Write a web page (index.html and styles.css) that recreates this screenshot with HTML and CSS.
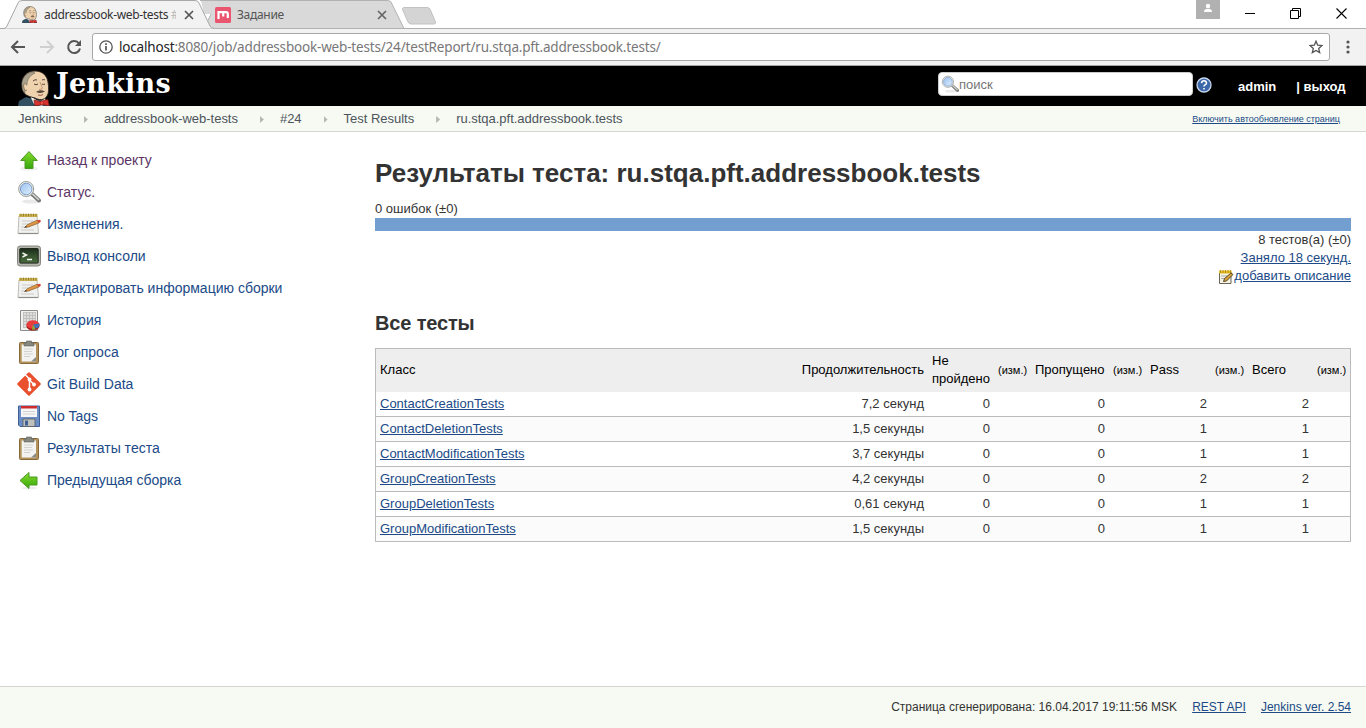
FILE: index.html
```
<!DOCTYPE html>
<html lang="ru">
<head>
<meta charset="utf-8">
<title>addressbook-web-tests #24 ru.stqa.pft.addressbook.tests [Jenkins]</title>
<link rel="stylesheet" href="styles.css">
</head>
<body>
<svg class="defs" width="0" height="0">
  <defs>
    <linearGradient id="green" x1="0" y1="0" x2="0" y2="1"><stop offset="0" stop-color="#86dc2c"/><stop offset="1" stop-color="#35a60c"/></linearGradient>
    <linearGradient id="screen" x1="0" y1="0" x2="0" y2="1"><stop offset="0" stop-color="#1b2b19"/><stop offset=".5" stop-color="#34502d"/><stop offset="1" stop-color="#4a6c3e"/></linearGradient>
    <linearGradient id="lens" x1="0" y1="0" x2="1" y2="1"><stop offset="0" stop-color="#9fc4ef"/><stop offset=".6" stop-color="#c3dcf8"/><stop offset="1" stop-color="#e6f2ff"/></linearGradient>
    <symbol id="butler" viewBox="0 0 34 36">
      <path d="M0 36 1 31 8 27 18 30 29 30 32 36Z" fill="#335061"/>
      <path d="M12 26 22 32 27 28 28 32 24 36 16 34Z" fill="#f2ede5"/>
      <path d="M7 24C5 22 4 19 4 16 3 7 9 1 17 1c8 0 12 5 13 11 1 6 1 11-1 14-3 5-8 4-12 2-4-1-8-2-10-4Z" fill="#efd2ae" stroke="#2b241e" stroke-width=".9"/>
      <path d="M4 16C3 9 8 3 14 2l3 1C11 6 9 10 9 15l-2 1 0 7C5 22 4 19 4 16Z" fill="#a9a18c" stroke="#5b5548" stroke-width=".5"/>
      <path d="M8 14c-2-1-3 1-2 4 0 2 2 3 3 2" fill="#efd2ae" stroke="#80664b" stroke-width=".8"/>
      <path d="M15 11q2-2 4-1M24 10q2-1 3 0M16 14q2 1.500 4 0M24 14q2 1 3 0" fill="none" stroke="#45372b" stroke-width=".9"/>
      <path d="M22 12c1 3 3 6 2 7l-3 .5" fill="none" stroke="#b98b62" stroke-width=".8"/>
      <path d="M18 22q4-3 9-.5-4 2.500-9 .5Z" fill="#5a4638"/>
      <path d="M20 25q3 1 5-.5" fill="none" stroke="#8c4a3a" stroke-width=".9"/>
      <path d="M16 30 22 31.500 30 29.500 31 36 25 34.500 17 36Z" fill="#d9332f" stroke="#7c1614" stroke-width=".7"/>
      <circle cx="24" cy="33" r="1.900" fill="#f04a42" stroke="#7c1614" stroke-width=".5"/>
    </symbol>
    <symbol id="glass" viewBox="0 0 24 24">
      <ellipse cx="14" cy="21.500" rx="9" ry="2" fill="#e9e9e9"/>
      <path d="m15 14 7 6.500" stroke="#777a75" stroke-width="4" stroke-linecap="round"/>
      <path d="m15.500 14 6 5.500" stroke="#d5d6d3" stroke-width="1.600" stroke-linecap="round"/>
      <circle cx="9.200" cy="9" r="7.500" fill="#f4f5f3" stroke="#979b95"/>
      <circle cx="9.200" cy="9" r="5.800" fill="url(#lens)" stroke="#6f93c4" stroke-width=".9"/>
    </symbol>
    <symbol id="notepad" viewBox="0 0 24 24">
      <path d="M2 4H20L21.500 21.500H1Z" fill="#f1f1ef" stroke="#b5b4b0" stroke-width=".9"/>
      <path d="M1.500 21.500H21" stroke="#8f8e8a" stroke-width="1.200"/>
      <path d="M2 2H20.500V5H2Z" fill="#ccb552"/>
      <path d="M4 1.500v3M6.500 1.500v3M9 1.500v3M11.500 1.500v3M14 1.500v3M16.500 1.500v3M19 1.500v3" stroke="#8a7324" stroke-width=".8"/>
      <path d="M5 9h11M5 12h6M4 15h4M4 18h13" stroke="#cbcbc9" stroke-width="1"/>
      <path d="m7.500 15.500 3-3L20 8.200 22 11 11.500 15Z" fill="#dc9546" stroke="#7a5327" stroke-width=".6"/>
      <path d="m20 8.200 3.300-.5.500 2L22 11Z" fill="#d44432"/>
      <path d="m7.500 15.500 1.500-1.600 1 1.300Z" fill="#333"/>
    </symbol>
    <symbol id="terminal" viewBox="0 0 24 24">
      <rect x=".5" y="2" width="23" height="20" rx="2.500" fill="#b3b5af" stroke="#85887f"/>
      <rect x="2.800" y="4.500" width="18.400" height="14.600" rx=".7" fill="url(#screen)" stroke="#20261d"/>
      <path d="m5.500 9 4 2-4 2M10 15.500h5" fill="none" stroke="#f3f6ef" stroke-width="1.400"/>
    </symbol>
    <symbol id="clipboard" viewBox="0 0 24 24">
      <rect x="2.500" y="2.500" width="19" height="21" rx="1" fill="#b3935a" stroke="#86683a"/>
      <path d="M4.700 4.500H19V21.500H4.700Z" fill="#f3f3f1"/>
      <path d="M7 9h9M7 11.500h8M7 14h9M7 16.500h6" stroke="#d2d2d0"/>
      <path d="M14 21.500 19 17V21.500Z" fill="#8a8a86"/>
      <path d="M7 2.800H9.500V1H14.500V2.800H17V6H7Z" fill="#858780" stroke="#62645c" stroke-width=".6"/>
    </symbol>
  </defs>
</svg>

<div class="browser">
  <div class="tabstrip">
    <svg class="tab-shapes" width="450" height="29" viewBox="0 0 450 29">
      <path d="M204 28.500 217 2Q218 .5 220 .5H387Q390 .5 391 2L404 28.500Z" fill="#d9d9d9" stroke="#b2b2b2"/>
      <path d="M204 14 201 .5H218V14Z" fill="#d9d9d9"/>
      <path d="M200 .5H220" stroke="#b2b2b2"/>
      <path d="M0 28.500H4Q6 28 7 26L18 3Q19 .5 22 .5H195Q198 .5 199 3L210 26Q211 28 214 28.500" fill="#f2f2f2" stroke="#a8a8a8"/>
      <path d="M403.500 7.500H427Q429 7.500 430 9L435.500 22Q436 24 434 24H411Q409 24 408 22L402.500 9.500Q402 8 403.500 7.500Z" fill="#d4d4d4" stroke="#c2c2c2"/>
    </svg>
    <div class="tab tab-active">
      <svg class="favicon" width="16" height="17"><use href="#butler" width="16" height="17"/></svg>
      <span class="tab-title">addressbook-web-tests <i>#</i></span>
      <svg class="tab-close" width="10" height="10"><path d="m1 1 8 8M9 1 1 9" stroke="#555" stroke-width="1.700"/></svg>
    </div>
    <div class="tab tab-second">
      <svg class="favicon" width="16" height="16"><rect width="16" height="16" rx="1.500" fill="#ea5570"/><path d="M3.500 4V12M3.500 5.200H11Q12.800 5.200 12.800 7V11M8.200 5.200V9.500" stroke="#fff" stroke-width="2.200" fill="none"/></svg>
      <span class="tab-title">Задание</span>
      <svg class="tab-close" width="10" height="10"><path d="m1 1 8 8M9 1 1 9" stroke="#666" stroke-width="1.700"/></svg>
    </div>
    <div class="window-controls">
      <svg class="profile" width="24" height="19"><rect width="24" height="19" fill="#b1b1b1"/><circle cx="12" cy="6" r="2.200" fill="#fff"/><path d="M8 12Q8 8.800 12 8.800T16 12Z" fill="#fff"/></svg>
      <svg class="minimize" width="11" height="11"><path d="M0 5.500H10" stroke="#000"/></svg>
      <svg class="restore" width="11" height="11"><path d="M.5 2.500H8.500V10.500H.5ZM2.500 2.500V.5H10.500V8.500H8.500" fill="none" stroke="#000"/></svg>
      <svg class="close" width="11" height="11"><path d="m.5.5 10 10M10.500.5.500 10.500" stroke="#000" stroke-width="1.100"/></svg>
    </div>
  </div>
  <div class="toolbar">
    <svg class="nav-back" width="16" height="14"><path d="M15 7H2M8 1 2 7 8 13" fill="none" stroke="#555" stroke-width="2"/></svg>
    <svg class="nav-forward" width="16" height="14"><path d="M1 7H13M8 1 14 7 8 13" fill="none" stroke="#d0d0d0" stroke-width="2"/></svg>
    <svg class="nav-reload" width="16" height="16"><path d="M13 4.500A6 6 0 1 0 14 9.500" fill="none" stroke="#555" stroke-width="2"/><path d="M15 1V7H9Z" fill="#555"/></svg>
    <div class="address">
      <svg width="14" height="14"><circle cx="7" cy="7" r="6.200" fill="none" stroke="#555" stroke-width="1.300"/><path d="M7 6V10.500M7 3.200V4.900" stroke="#555" stroke-width="1.700"/></svg>
      <span class="url"><b>localhost</b>:8080/job/addressbook-web-tests/24/testReport/ru.stqa.pft.addressbook.tests/</span>
      <svg class="star" width="14" height="14"><path d="m7 1.200 1.700 4 4.300.4-3.300 2.800 1 4.200L7 10.400l-3.700 2.200 1-4.200L1 5.600l4.300-.4Z" fill="none" stroke="#555" stroke-width="1.300"/></svg>
    </div>
    <svg class="kebab" width="4" height="14"><g fill="#555"><circle cx="2" cy="2" r="1.600"/><circle cx="2" cy="7" r="1.600"/><circle cx="2" cy="12" r="1.600"/></g></svg>
  </div>
</div>

<header class="header">
  <svg class="logo" width="34" height="36"><use href="#butler" width="34" height="36"/></svg>
  <span class="brand">Jenkins</span>
  <div class="search">
    <svg width="18" height="18"><use href="#glass" width="18" height="18"/></svg>
    <span>поиск</span>
  </div>
  <svg class="help" width="16" height="16"><circle cx="8" cy="8" r="7" fill="#3c68aa" stroke="#c8d8ef" stroke-width="1.300"/><path d="M5.500 6.200Q5.800 3.800 8 3.800T10.500 6Q10.500 7.300 8.900 7.900 8 8.300 8 9.600M8 11V12.600" fill="none" stroke="#fff" stroke-width="1.600"/></svg>
  <a class="user">admin</a>
  <a class="logout">| выход</a>
</header>

<nav class="crumbs">
  <a>Jenkins</a><i></i><a>addressbook-web-tests</a><i></i><a>#24</a><i></i><a>Test Results</a><i></i><a>ru.stqa.pft.addressbook.tests</a>
  <a class="refresh">Включить автообновление страниц</a>
</nav>

<div class="page">
  <aside class="tasks">
    <a class="task visited"><svg width="24" height="24"><ellipse cx="12" cy="20.500" rx="9" ry="2" fill="#eee"/><path d="M12 3.500 20.300 12.500H16V20.500H8V12.500H3.700Z" fill="url(#green)" stroke="#4b9a25"/></svg><span>Назад к проекту</span></a>
    <a class="task visited"><svg width="24" height="24"><use href="#glass"/></svg><span>Статус.</span></a>
    <a class="task"><svg width="24" height="24"><use href="#notepad"/></svg><span>Изменения.</span></a>
    <a class="task"><svg width="24" height="24"><use href="#terminal"/></svg><span>Вывод консоли</span></a>
    <a class="task"><svg width="24" height="24"><use href="#notepad"/></svg><span>Редактировать информацию сборки</span></a>
    <a class="task"><svg width="24" height="24"><path d="M3.500 2.500H20.500V22.500H3.500Z" fill="#f1f1ef" stroke="#8c8c88"/><path d="M6 5H18.500V20H6Z" fill="#dededc"/><path d="M6 4.500H19M6 7.500H19M6 10.500H19M6 13.500H19M6 16.500H19M6 19.500H19M6.500 4V20M9.500 4V20M12.500 4V20M15.500 4V20M18.500 4V20" stroke="#bababa" stroke-width=".8"/><ellipse cx="16" cy="18" rx="6.500" ry="4.500" fill="#a81515"/><ellipse cx="16" cy="16.500" rx="6.500" ry="4.300" fill="#ea3c3c"/><path d="m16 16.500 6.500-1q.5 5-4 5Z" fill="#3f73b5"/><path d="m16 16.500 2.500 5-3.500.3Z" fill="#85b13c"/></svg><span>История</span></a>
    <a class="task"><svg width="24" height="24"><use href="#clipboard"/></svg><span>Лог опроса</span></a>
    <a class="task git"><svg width="24" height="24"><path d="m11 .7-10.300 10.300q-1 1 0 2L11 23.300q1 1 2 0L23.300 13q1-1 0-2L13 .7q-1-1-2 0Z" fill="#e9502f"/><path d="M8 2.500 12.500 7V18M12.500 8 17 12.500" fill="none" stroke="#fff" stroke-width="1.500"/><circle cx="12.500" cy="7.500" r="1.900" fill="#fff"/><circle cx="12.500" cy="17.500" r="1.900" fill="#fff"/><circle cx="17" cy="12.500" r="1.900" fill="#fff"/></svg><span>Git Build Data</span></a>
    <a class="task"><svg width="24" height="24"><path d="M1.500 2H22.500V22.500H3L1.500 21Z" fill="#6a8dc5" stroke="#3f5f95"/><path d="M4 2H20V13H4Z" fill="#f6f6f6"/><path d="M4 2H20V4.500H4Z" fill="#cf2c2c"/><path d="M6 7.500H18M6 10H18" stroke="#d2d2d2"/><path d="M6 15H18V22.500H6Z" fill="#bfc1bd" stroke="#555b63" stroke-width=".8"/><path d="M8 16.500H11V21.500H8Z" fill="#3f5f95"/></svg><span>No Tags</span></a>
    <a class="task"><svg width="24" height="24"><use href="#clipboard"/></svg><span>Результаты теста</span></a>
    <a class="task"><svg width="24" height="24"><ellipse cx="12" cy="20" rx="8" ry="1.500" fill="#eee"/><path d="M3 12.500 12 4.500V9H20V17H12V20.500Z" fill="url(#green)" stroke="#4b9a25"/></svg><span>Предыдущая сборка</span></a>
  </aside>

  <main class="main">
    <h1><span>Результаты теста: ru.stqa.pft.addressbook.tests</span></h1>
    <div class="failures">0 ошибок (±0)</div>
    <div class="bar"></div>
    <div class="summary">
      <div>8 тестов(а) (±0)</div>
      <div><a>Заняло 18 секунд.</a></div>
      <div class="describe"><svg width="16" height="16"><path d="M1.500 3H13V14.500H1.500Z" fill="#f5f3e4" stroke="#696657"/><path d="M1 1.500H13.500V4.500H1Z" fill="#e5bd25"/><path d="M2.500 1v3M5 1v3M7.500 1v3M10 1v3M12.500 1v3" stroke="#ae8510" stroke-width=".8"/><path d="M3 7h6M3 9.500h4" stroke="#aaa"/><path d="m5.500 12.500 1-3L13 4l2 1.500L8.500 12Z" fill="#d6a13b" stroke="#4a3c20" stroke-width=".9"/></svg><a>добавить описание</a></div>
    </div>
    <h2>Все тесты</h2>
    <table class="results">
      <colgroup><col><col class="w-fail"><col class="w-diff"><col class="w-skip"><col class="w-diff"><col class="w-pass"><col class="w-diff"><col class="w-pass"><col class="w-diff"></colgroup>
      <thead>
        <tr><th><div class="class-head"><span>Класс</span><span>Продолжительность</span></div></th><th>Не пройдено</th><th class="diff">(изм.)</th><th>Пропущено</th><th class="diff">(изм.)</th><th>Pass</th><th class="diff">(изм.)</th><th>Всего</th><th class="diff">(изм.)</th></tr>
      </thead>
      <tbody>
        <tr><td><div class="class-head"><a>ContactCreationTests</a><span>7,2 секунд</span></div></td><td>0</td><td></td><td>0</td><td></td><td>2</td><td></td><td>2</td><td></td></tr>
        <tr><td><div class="class-head"><a>ContactDeletionTests</a><span>1,5 секунды</span></div></td><td>0</td><td></td><td>0</td><td></td><td>1</td><td></td><td>1</td><td></td></tr>
        <tr><td><div class="class-head"><a>ContactModificationTests</a><span>3,7 секунды</span></div></td><td>0</td><td></td><td>0</td><td></td><td>1</td><td></td><td>1</td><td></td></tr>
        <tr><td><div class="class-head"><a>GroupCreationTests</a><span>4,2 секунды</span></div></td><td>0</td><td></td><td>0</td><td></td><td>2</td><td></td><td>2</td><td></td></tr>
        <tr><td><div class="class-head"><a>GroupDeletionTests</a><span>0,61 секунд</span></div></td><td>0</td><td></td><td>0</td><td></td><td>1</td><td></td><td>1</td><td></td></tr>
        <tr><td><div class="class-head"><a>GroupModificationTests</a><span>1,5 секунды</span></div></td><td>0</td><td></td><td>0</td><td></td><td>1</td><td></td><td>1</td><td></td></tr>
      </tbody>
    </table>
  </main>
</div>

<footer class="footer">
  <span>Страница сгенерирована: 16.04.2017 19:11:56 MSK</span>
  <a>REST API</a>
  <a>Jenkins ver. 2.54</a>
</footer>
</body>
</html>
```
FILE: styles.css
```
* { box-sizing: border-box; }
html, body { height: 100%; }
body {
  margin: 0;
  height: 728px;
  display: flex;
  flex-direction: column;
  overflow: hidden;
  background: #fff;
  color: #333;
  font: 13px/18px "Liberation Sans", Arial, sans-serif;
}
svg { display: block; flex: none; }
.defs { position: absolute; }

/* Browser window */
.browser { flex: none; height: 66px; font-family: "Noto Sans", sans-serif; }
.tabstrip { position: relative; display: flex; height: 29px; border-bottom: 1px solid #b0b0b0; background: #fff; }
.tab-shapes { position: absolute; left: 0; top: 0; }
.tab { position: relative; display: flex; align-items: center; height: 29px; white-space: nowrap; }
.tab-active { width: 204px; padding-left: 22px; }
.tab-second { width: 200px; padding-left: 11px; }
.favicon { margin-right: 6px; }
.tab-title { flex: 1; font-size: 12px; color: #333; overflow: hidden; letter-spacing: -.3px; }
.tab-active .tab-title { flex: none; width: 132px; margin-right: 8px; letter-spacing: -.33px; }
.tab-title i { font-style: normal; color: #bbb; }
.tab-second .tab-title { color: #555; }
.tab-second .tab-close { margin-right: 17px; }
.window-controls { display: flex; margin-left: auto; padding-right: 19px; align-items: flex-start; }
.minimize, .restore, .close { margin-top: 8px; }
.minimize { margin-left: 25px; }
.restore { margin-left: 34px; }
.close { margin-left: 35px; }
.toolbar { display: flex; align-items: center; height: 37px; background: #f2f2f2; border-bottom: 1px solid #a5a5a5; padding: 0 16px 0 10px; }
.nav-forward { margin-left: 13px; }
.nav-reload { margin-left: 11px; }
.address { display: flex; align-items: center; width: 1238px; height: 28px; margin-left: 10px; padding: 0 6px; border: 1px solid #a8a8a8; border-radius: 3px; background: #fff; }
.url { margin-left: 6px; font-size: 13.5px; letter-spacing: -.18px; color: #777; white-space: nowrap; }
.url b { font-weight: 400; color: #222; }
.star { margin-left: auto; }
.kebab { margin-left: auto; }

/* Jenkins header */
.header { flex: none; display: flex; height: 40px; padding-left: 18px; background: #000; color: #fff; }
.logo { margin-top: 4px; }
.brand { width: 883px; padding-left: 4px; font: bold 27px/36px "DejaVu Serif", serif; letter-spacing: .2px; }
.search { flex: none; display: flex; align-items: center; width: 255px; height: 24px; margin: 6px 0 0 3px; padding-left: 2px; border: 1px solid #ccc; border-radius: 4px; background: #fff; color: #757575; }
.search span { padding-top: 2px; }
.help { margin: 11px 0 0 3px; }
.user, .logout { font-weight: bold; line-height: 41px; white-space: nowrap; }
.user { margin-left: 26px; }
.logout { margin-left: 20px; }

.crumbs { flex: none; display: flex; height: 26px; padding: 0 26px 0 18px; border-bottom: 1px solid #d3d7cf; background: #f6faf2; color: #4d545d; line-height: 25px; white-space: nowrap; letter-spacing: -.02px; }
.crumbs i { width: 4px; height: 7px; margin: 10px 16px 0 22px; background: #b5b8b1; clip-path: polygon(0 0, 100% 50%, 0 100%); }
.refresh { margin-left: auto; color: #204a87; font-size: 9px; line-height: 26px; letter-spacing: 0; text-decoration: underline; }

/* Page columns */
.page { flex: 1; display: flex; min-height: 0; }
.tasks { flex: none; width: 375px; padding: 12px 0 0 17px; }
.task { display: flex; align-items: center; height: 32px; color: #204a87; font-size: 14px; }
.task span { margin-left: 6px; white-space: nowrap; }
.task.visited { color: #5c3566; }
.main { width: 976px; padding-top: 24px; }
h1 { margin: 0; height: 44px; font-size: 26px; line-height: 34px; white-space: nowrap; }
.failures { height: 18px; }
.bar { height: 13px; background: #729fcf; }
.summary { text-align: right; }
.summary a, .results a, .footer a { color: #204a87; text-decoration: underline; }
.describe { display: flex; justify-content: flex-end; }
.describe svg { margin-top: 2px; }
h2 { margin: 26px 0 0; height: 37px; font-size: 20px; line-height: 24px; letter-spacing: -.15px; }

.results { width: 976px; table-layout: fixed; border-collapse: separate; border-spacing: 0; border: 1px solid #bbb; border-bottom: 0; }
.w-fail { width: 66px; }
.w-diff { width: 37px; }
.w-skip { width: 78px; }
.w-pass { width: 65px; }
th { height: 43px; padding: 2px 4px 3px; background: #eee; color: #000; font-weight: 400; text-align: left; }
th.diff { font-size: 11px; white-space: nowrap; }
td { height: 25px; padding: 0 4px; border-bottom: 1px solid #bbb; text-align: right; }
tbody tr:nth-child(even) td { background: #fbfbfb; }
.class-head { display: flex; justify-content: space-between; }

.footer { flex: none; display: flex; justify-content: flex-end; gap: 15px; height: 42px; padding: 11px 15px 0 0; border-top: 1px solid #d3d7cf; background: #f6faf2; font-size: 12px; }
```
